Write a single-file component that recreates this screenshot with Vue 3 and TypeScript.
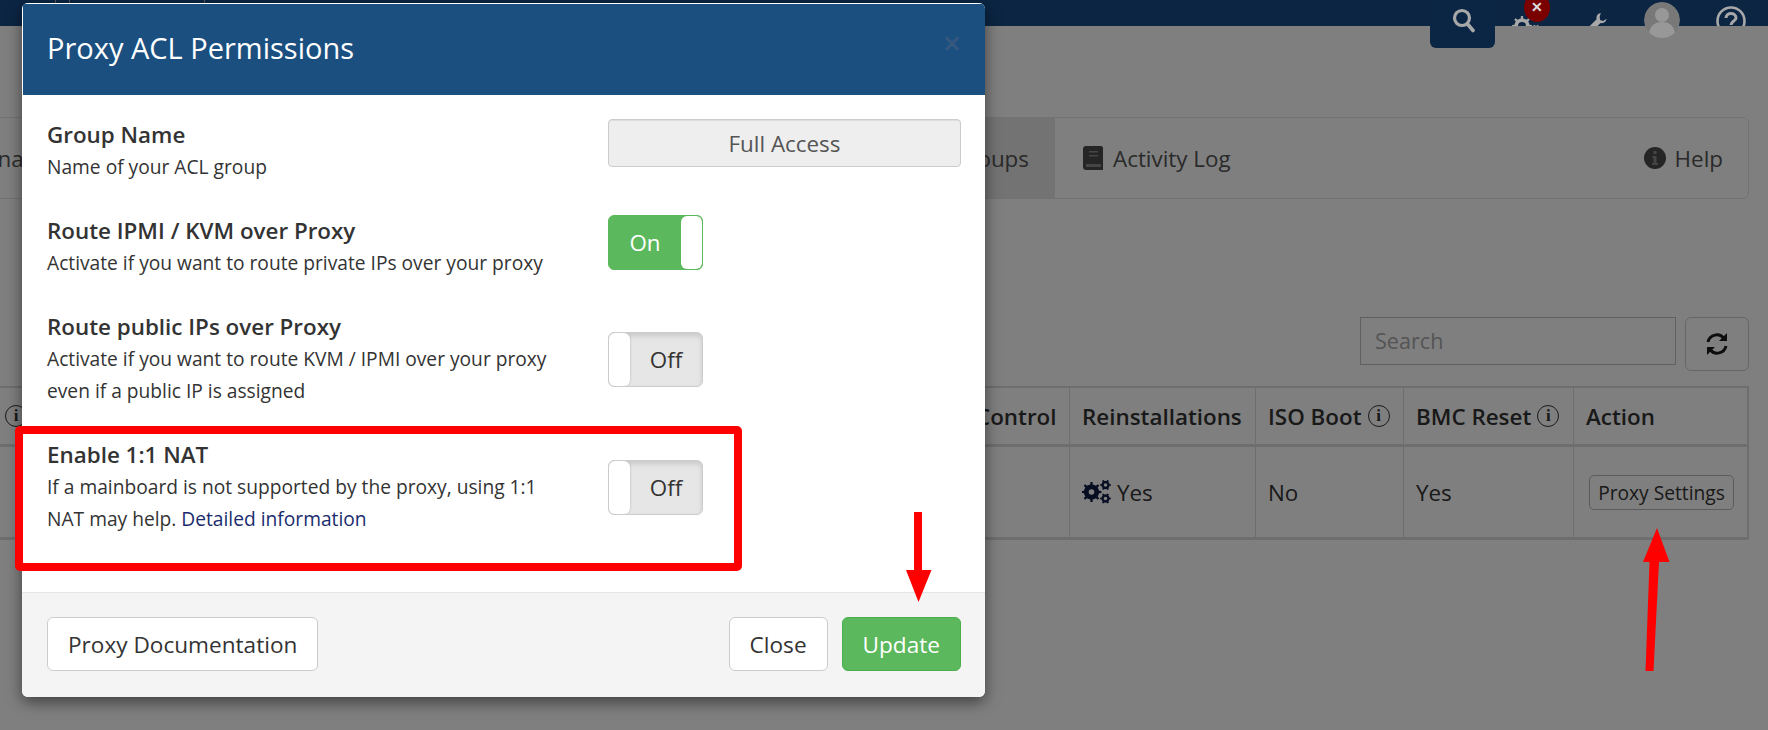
<script setup lang="ts">
function gearPath(cx: number, cy: number, r: number, hole: number, teeth = 8): string {
  const pts: string[] = [];
  const step = (Math.PI * 2) / teeth;
  for (let i = 0; i < teeth; i++) {
    const a = i * step;
    const spots: [number, number][] = [
      [a - step * 0.5, r * 0.76],
      [a - step * 0.2, r * 0.76],
      [a - step * 0.14, r],
      [a + step * 0.14, r],
      [a + step * 0.2, r * 0.76],
    ];
    for (const [ang, rad] of spots) {
      pts.push(`${(cx + Math.cos(ang) * rad).toFixed(2)} ${(cy + Math.sin(ang) * rad).toFixed(2)}`);
    }
  }
  const ring = `M${cx - hole} ${cy}a${hole} ${hole} 0 1 0 ${hole * 2} 0a${hole} ${hole} 0 1 0 ${-hole * 2} 0Z`;
  return `M${pts.join('L')}Z${ring}`;
}

const navGear = gearPath(10, 10, 10, 4);
const navGearSmall = gearPath(24, 13, 4.5, 2, 6);
const bigGear = gearPath(9.5, 12, 10, 2.8);
const smallGearTop = gearPath(23.5, 5, 5.5, 1.8, 6);
const smallGearBottom = gearPath(23.5, 18.5, 5.5, 1.8, 6);

const rows = [
  {
    title: 'Route IPMI / KVM over Proxy',
    lines: ['Activate if you want to route private IPs over your proxy'],
    on: true,
    centered: false,
  },
  {
    title: 'Route public IPs over Proxy',
    lines: ['Activate if you want to route KVM / IPMI over your proxy', 'even if a public IP is assigned'],
    on: false,
    centered: true,
  },
];
</script>

<template>
  <div class="page">
    <header class="nav">
      <div class="logo-marks"><i></i><i></i><i></i></div>
    </header>

    <div class="content">
      <div class="tabs">
        <div class="tabs-left">
          <span class="tab">Manage</span>
          <span class="tab active">Groups</span>
        </div>
        <span class="tab log">
          <svg width="20" height="24" viewBox="0 0 20 24">
            <path fill="#4a4a4a" d="M3 0h15a2 2 0 0 1 2 2v22H3a3 3 0 0 1-3-3V3a3 3 0 0 1 3-3z" />
            <path fill="#8a8a8a" d="M3 18h15v3H3zM6 5h9v1.6H6zM6 9h9v1.6H6z" />
          </svg>
          Activity Log
        </span>
        <span class="tab help">
          <svg width="22" height="22" viewBox="0 0 22 22">
            <circle cx="11" cy="11" r="11" fill="#4a4a4a" />
            <path fill="#8a8a8a" d="M9.5 4h3v3h-3zM8.5 9h4v7h1.5v2H8v-2h1.5v-5h-1z" />
          </svg>
          Help
        </span>
      </div>

      <div class="toolbar">
        <input class="search" placeholder="Search" type="text" />
        <button class="refresh" type="button">
          <svg width="24" height="24" viewBox="0 0 24 24">
            <path fill="none" stroke="#1a1a1a" stroke-width="3" d="M3 10a9 9 0 0 1 16-3.5M21 14a9 9 0 0 1-16 3.5" />
            <path fill="#1a1a1a" d="M22 1v8h-8zM2 23v-8h8z" />
          </svg>
        </button>
      </div>

      <div class="table">
        <div class="cell head"><span class="ring">i</span></div>
        <div class="cell head"></div>
        <div class="cell head">Control</div>
        <div class="cell head">Reinstallations</div>
        <div class="cell head">ISO Boot <span class="ring">i</span></div>
        <div class="cell head">BMC Reset <span class="ring">i</span></div>
        <div class="cell head">Action</div>

        <div class="cell"></div>
        <div class="cell"></div>
        <div class="cell"></div>
        <div class="cell">
          <svg class="gears" width="29" height="24" viewBox="0 0 29 24">
            <path fill="#101c44" fill-rule="evenodd" :d="bigGear" />
            <path fill="#101c44" fill-rule="evenodd" :d="smallGearTop" />
            <path fill="#101c44" fill-rule="evenodd" :d="smallGearBottom" />
          </svg>
          Yes
        </div>
        <div class="cell">No</div>
        <div class="cell">Yes</div>
        <div class="cell"><button class="proxy-btn" type="button">Proxy Settings</button></div>
      </div>
    </div>

    <div class="overlay">
      <div class="modal">
        <div class="modal-head">
          <h4>Proxy ACL Permissions</h4>
          <span class="close-x">×</span>
        </div>

        <div class="modal-body">
          <div class="row">
            <div class="text">
              <div class="title">Group Name</div>
              <div class="desc">Name of your ACL group</div>
            </div>
            <div class="group-input">Full Access</div>
          </div>

          <div v-for="row in rows" :key="row.title" class="row" :class="{ centered: row.centered }">
            <div class="text">
              <div class="title">{{ row.title }}</div>
              <div v-for="line in row.lines" :key="line" class="desc">{{ line }}</div>
            </div>
            <div class="toggle" :class="row.on ? 'on' : 'off'">
              <template v-if="row.on">
                <span class="label">On</span><span class="knob"></span>
              </template>
              <template v-else>
                <span class="knob"></span><span class="label">Off</span>
              </template>
            </div>
          </div>

          <div class="row centered">
            <div class="text">
              <div class="title">Enable 1:1 NAT</div>
              <div class="desc">If a mainboard is not supported by the proxy, using 1:1</div>
              <div class="desc">NAT may help. <a class="link">Detailed information</a></div>
            </div>
            <div class="toggle off"><span class="knob"></span><span class="label">Off</span></div>
          </div>
        </div>

        <div class="modal-foot">
          <button class="btn" type="button">Proxy Documentation</button>
          <div class="foot-right">
            <button class="btn" type="button">Close</button>
            <button class="btn update" type="button">Update</button>
          </div>
        </div>
      </div>
    </div>

    <div class="nav-tools">
      <div class="search-tab">
        <svg width="24" height="26" viewBox="0 0 24 26">
          <circle cx="10" cy="11" r="7.5" fill="none" stroke="#a8a8a8" stroke-width="3.2" />
          <path d="M15.5 17l5.500 6.500" stroke="#a8a8a8" stroke-width="3.6" stroke-linecap="round" />
        </svg>
      </div>
      <div class="clip gear">
        <svg width="30" height="20" viewBox="0 0 30 20">
          <path fill="#a8a8a8" fill-rule="evenodd" :d="navGear" />
          <path fill="#a8a8a8" fill-rule="evenodd" :d="navGearSmall" />
        </svg>
      </div>
      <div class="badge">✕</div>
      <div class="clip wrench">
        <svg width="20" height="22" viewBox="0 0 26 28">
          <path fill="#a8a8a8" d="M18 1c-4 .5-6.500 4-5.500 8L1 20.500 6 26l11.500-12c4 1 7.500-1.500 8-5.500l-4.500 3-4-1.500-.5-4.500z" />
        </svg>
      </div>
      <div class="avatar">
        <svg width="36" height="36" viewBox="0 0 36 36">
          <circle cx="18" cy="18" r="18" fill="#787878" />
          <circle cx="18" cy="13" r="7" fill="#989898" />
          <path fill="#989898" d="M5 31c1-8 7-11 13-11s12 3 13 11a18 18 0 0 1-26 0z" />
        </svg>
      </div>
      <div class="clip question">
        <svg width="30" height="30" viewBox="0 0 30 30">
          <circle cx="15" cy="15" r="13.500" fill="none" stroke="#a8a8a8" stroke-width="2.600" />
          <path fill="none" stroke="#a8a8a8" stroke-width="3" d="M10 12c0-6 10-6 10 0 0 3-5 3-5 7" />
          <path fill="#a8a8a8" d="M13.500 21h3v3h-3z" />
        </svg>
      </div>
    </div>

    <div class="red-box"></div>
    <svg class="arrows" width="1768" height="730" viewBox="0 0 1768 730">
      <path fill="#ff0000" d="M914 512h8v58h9.500l-13 32-12.500-32H914z" />
      <path fill="#ff0000" d="M1657 528l12.500 34h-10.500l-5.500 109h-8l4-109h-6.500z" />
    </svg>
  </div>
</template>

<style scoped>
.page {
  position: relative;
  width: 1768px;
  height: 730px;
  overflow: hidden;
  background: #fff;
  color: #333;
  font-family: "Open Sans", sans-serif;
  font-size: 22.4px;
}
.nav {
  height: 26px;
  background: #164b87;
}
.logo-marks i {
  position: absolute;
  top: 0;
  width: 1px;
  height: 4px;
  background: #b0b0b0;
}
.logo-marks i:nth-child(1) { left: 55px; }
.logo-marks i:nth-child(2) { left: 69px; }
.logo-marks i:nth-child(3) { left: 204px; }
.content {
  padding: 91px 19px 0 0;
}
.tabs {
  display: flex;
  align-items: stretch;
  height: 82px;
  margin-left: -36px;
  border: 1px solid #e4e4e4;
  border-radius: 0 6px 6px 0;
  box-sizing: border-box;
}
.tabs-left {
  display: flex;
  justify-content: space-between;
  width: 1090px;
}
.tab {
  display: flex;
  align-items: center;
  gap: 10px;
  padding: 0 26px 0 0;
  color: #555;
}
.tab.active {
  background: #e7e7e7;
}
.tab.log {
  padding-left: 28px;
}
.tab.help {
  margin-left: auto;
  gap: 9px;
  padding-right: 25px;
}
.toolbar {
  display: flex;
  justify-content: flex-end;
  align-items: flex-start;
  gap: 9px;
  margin-top: 118px;
}
.search {
  width: 316px;
  height: 48px;
  box-sizing: border-box;
  padding: 0 14px 2px;
  border: 1px solid #c0c0c0;
  font-family: inherit;
  font-size: 21.6px;
  background: #fff;
}
.search::placeholder {
  color: #aaa;
}
.refresh {
  display: flex;
  align-items: center;
  justify-content: center;
  width: 64px;
  height: 54px;
  padding: 0;
  border: 1px solid #ccc;
  border-radius: 6px;
  background: #fff;
}
.table {
  display: grid;
  grid-template-columns: 30px 934px 106px 186px 148px 170px 175px;
  grid-template-rows: 59px 90px;
  border: solid #ddd;
  border-width: 2px 2px 3px 0;
  box-sizing: border-box;
  margin-top: 15px;
}
.cell {
  display: flex;
  align-items: center;
  gap: 6px;
  padding: 0 12px;
  border-right: 1px solid #ddd;
  box-sizing: border-box;
  min-width: 0;
}
.cell:nth-child(7n) {
  border-right: 0;
}
.head {
  font-weight: 600;
  border-bottom: 3px solid #ddd;
  white-space: nowrap;
}
.ring {
  display: inline-flex;
  align-items: center;
  justify-content: center;
  flex: none;
  width: 22px;
  height: 22px;
  border: 1.5px solid #333;
  border-radius: 50%;
  box-sizing: border-box;
  font-family: "Liberation Serif", serif;
  font-size: 17px;
  font-weight: 700;
}
.cell:first-child {
  padding: 0 0 0 5px;
}
.gears {
  flex: none;
}
.proxy-btn {
  height: 35px;
  width: 145px;
  margin-left: 3px;
  padding: 0;
  border: 1px solid #b8b8b8;
  border-radius: 5px;
  background: #fff;
  color: #333;
  font-family: inherit;
  font-size: 19.2px;
  flex: none;
}
.overlay {
  position: absolute;
  inset: 0;
  padding: 3px 0 0 22px;
  background: rgba(0, 0, 0, 0.5);
}
.modal {
  display: flex;
  flex-direction: column;
  width: 963px;
  height: 694px;
  box-sizing: border-box;
  background: #fff;
  border-radius: 6px;
  box-shadow: 0 5px 15px rgba(0, 0, 0, 0.5);
  overflow: hidden;
}
.modal-head {
  display: flex;
  align-items: center;
  justify-content: space-between;
  flex: none;
  height: 92px;
  padding: 0 24px 0 24px;
  box-sizing: border-box;
  background: #1b4f80;
  border-top: 1px solid #fff;
  border-left: 1px solid #fff;
}
.modal-head h4 {
  margin: 0 0 4px;
  color: #fff;
  font-size: 29px;
  font-weight: 400;
}
.close-x {
  margin-top: -14px;
  color: #35587f;
  font-size: 32px;
  font-weight: 600;
  line-height: 1;
}
.modal-body {
  flex: 1;
  padding: 24px 24px 0 25px;
}
.row {
  display: flex;
  align-items: flex-start;
  padding-bottom: 32px;
}
.row.centered {
  align-items: center;
}
.text {
  width: 561px;
  flex: none;
  line-height: 32px;
}
.title {
  font-size: 22.4px;
  font-weight: 600;
}
.desc {
  font-size: 19.2px;
}
.link {
  color: #1a2c6d;
}
.group-input {
  width: 353px;
  height: 48px;
  display: flex;
  align-items: center;
  justify-content: center;
  box-sizing: border-box;
  border: 1px solid #ccc;
  border-radius: 4px;
  background: #eee;
  box-shadow: inset 0 1px 1px rgba(0, 0, 0, 0.075);
  color: #555;
  font-size: 22.4px;
}
.toggle {
  display: flex;
  width: 95px;
  height: 55px;
  flex: none;
  box-sizing: border-box;
  border: 1px solid #ccc;
  border-radius: 6px;
  overflow: hidden;
  font-size: 22.4px;
}
.toggle .knob {
  flex: none;
  width: 21px;
  background: #fff;
  border-radius: 6px;
}
.toggle .label {
  flex: 1;
  display: flex;
  align-items: center;
  justify-content: center;
}
.toggle.on {
  border-color: #5cb85c;
  background: #5cb85c;
  color: #fff;
}
.toggle.off {
  background: #e6e6e6;
  box-shadow: inset 0 3px 5px rgba(0, 0, 0, 0.125);
}
.toggle.off .knob {
  box-shadow: 1px 0 2px rgba(0, 0, 0, 0.1);
}
.modal-foot {
  display: flex;
  justify-content: space-between;
  align-items: center;
  flex: none;
  height: 105px;
  padding: 0 24px 2px 25px;
  box-sizing: border-box;
  background: #f4f4f4;
  border-top: 1px solid #e5e5e5;
}
.foot-right {
  display: flex;
  gap: 14px;
}
.btn {
  height: 54px;
  padding: 0 20px;
  box-sizing: border-box;
  border: 1px solid #ccc;
  border-radius: 6px;
  background: #fff;
  color: #333;
  font-family: inherit;
  font-size: 22.6px;
}
.btn.update {
  background: #5cb85c;
  border-color: #4cae4c;
  color: #fff;
}
.nav-tools {
  position: absolute;
  top: 0;
  left: 0;
}
.search-tab {
  position: absolute;
  left: 1430px;
  top: 0;
  width: 65px;
  height: 48px;
  padding: 7px 0 0 22px;
  box-sizing: border-box;
  background: #0b2644;
  border-radius: 0 0 6px 6px;
}
.clip {
  position: absolute;
  top: 0;
  height: 26px;
  overflow: hidden;
}
.gear { left: 1512px; padding-top: 12px; height: 14px; }
.wrench { left: 1587px; padding-top: 10px; height: 16px; }
.question { left: 1716px; padding-top: 6px; height: 20px; }
.badge {
  position: absolute;
  left: 1524px;
  top: -7px;
  width: 26px;
  height: 29px;
  border-radius: 50%;
  background: #7a0000;
  color: #ddd;
  font-size: 14px;
  font-weight: 700;
  line-height: 28px;
  text-align: center;
}
.avatar {
  position: absolute;
  left: 1644px;
  top: 2px;
  height: 36px;
  border-radius: 50%;
  overflow: hidden;
}
.red-box {
  position: absolute;
  left: 15px;
  top: 426px;
  width: 727px;
  height: 145px;
  box-sizing: border-box;
  border: 8px solid #ff0000;
  border-radius: 5px;
}
.arrows {
  position: absolute;
  left: 0;
  top: 0;
}
</style>
